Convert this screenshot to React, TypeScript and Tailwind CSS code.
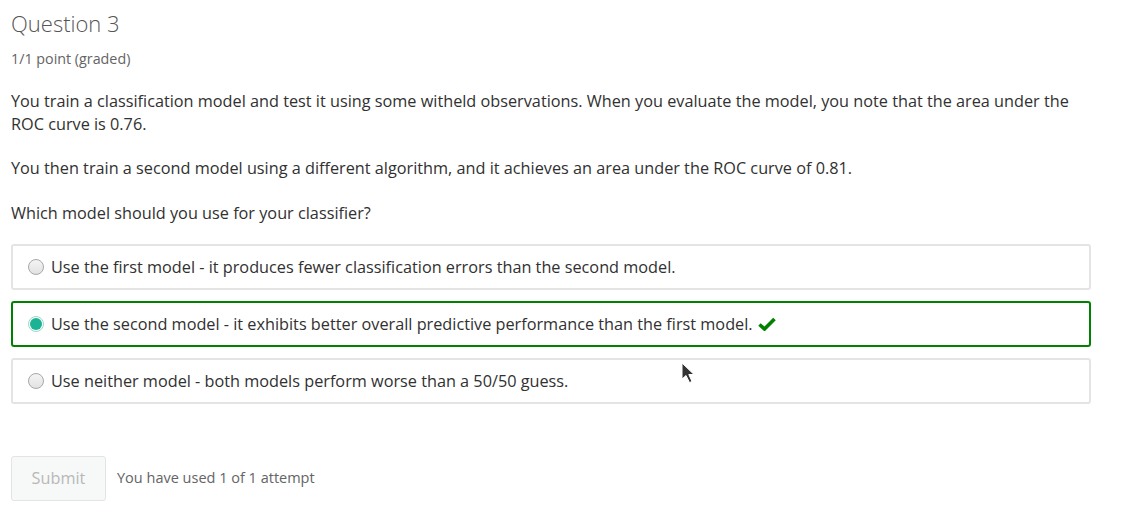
import React from "react";

const options = [
  { text: "Use the first model - it produces fewer classification errors than the second model.", selected: false },
  { text: "Use the second model - it exhibits better overall predictive performance than the first model.", selected: true },
  { text: "Use neither model - both models perform worse than a 50/50 guess.", selected: false },
];

function Radio({ checked }: { checked: boolean }) {
  if (checked) {
    return (
      <span className="w-[16px] h-[16px] rounded-full border border-[#9ad9c9] bg-white flex items-center justify-center shrink-0">
        <span className="w-[12px] h-[12px] rounded-full bg-[#1ab394]" />
      </span>
    );
  }
  return (
    <span className="w-[16px] h-[16px] rounded-full border border-[#a8a8a8] bg-gradient-to-b from-[#f4f4f4] to-[#e2e2e2] shrink-0" />
  );
}

function Check() {
  return (
    <svg width="18" height="14" viewBox="0 0 18 14" className="-ml-[2px]">
      <path d="M1.5 7.5 L6.5 12 L16.5 2" fill="none" stroke="#008100" strokeWidth="3.6" strokeLinejoin="miter" />
    </svg>
  );
}

export default function App() {
  return (
    <div className="relative w-[1121px] h-[513px] bg-white font-['Open_Sans',sans-serif] text-[#313131] px-[11px] pt-[8px]">
      <h2 className="text-[22px] font-light text-[#555] leading-[30px]">Question 3</h2>
      <div className="text-[14.3px] text-[#646464] mt-[11px] leading-[19px]">1/1 point (graded)</div>

      <div className="mt-[22px] text-[16.25px] leading-[23px] w-[1070px]">
        <p>
          You train a classification model and test it using some witheld observations. When you evaluate the model, you note that the area under the ROC curve is 0.76.
        </p>
        <p className="mt-[21px]">You then train a second model using a different algorithm, and it achieves an area under the ROC curve of 0.81.</p>
        <p className="mt-[22px]">Which model should you use for your classifier?</p>
      </div>

      <div className="mt-[19px] flex flex-col gap-[11px] w-[1080px]">
        {options.map((o, i) => (
          <div
            key={i}
            className={
              o.selected
                ? "h-[46px] flex items-center gap-[7px] pl-[15px] rounded-[3px] border-2 border-[#008100]"
                : "h-[46px] flex items-center gap-[7px] pl-[15px] rounded-[3px] border-2 border-[#e4e4e4]"
            }
          >
            <Radio checked={o.selected} />
            <span className="text-[16.25px] leading-[22px]">{o.text}</span>
            {o.selected && <Check />}
          </div>
        ))}
      </div>

      <div className="mt-[52px] flex items-center gap-[11px]">
        <button className="w-[95px] h-[45px] rounded-[3px] border border-[#e4e4e4] bg-[#f7f8f8] text-[16.25px] text-[#b8b8b8]">
          Submit
        </button>
        <span className="text-[14.5px] text-[#646464] -mt-[2px]">You have used 1 of 1 attempt</span>
      </div>

      <svg className="absolute left-[681px] top-[362px]" width="15" height="23" viewBox="0 0 15 23">
        <path d="M1 1 L1 17 L5 13.5 L8.5 20.5 L11 19.5 L7.8 12.5 L13 12.5 Z" fill="#333" stroke="#fff" strokeWidth="1" />
      </svg>
    </div>
  );
}
